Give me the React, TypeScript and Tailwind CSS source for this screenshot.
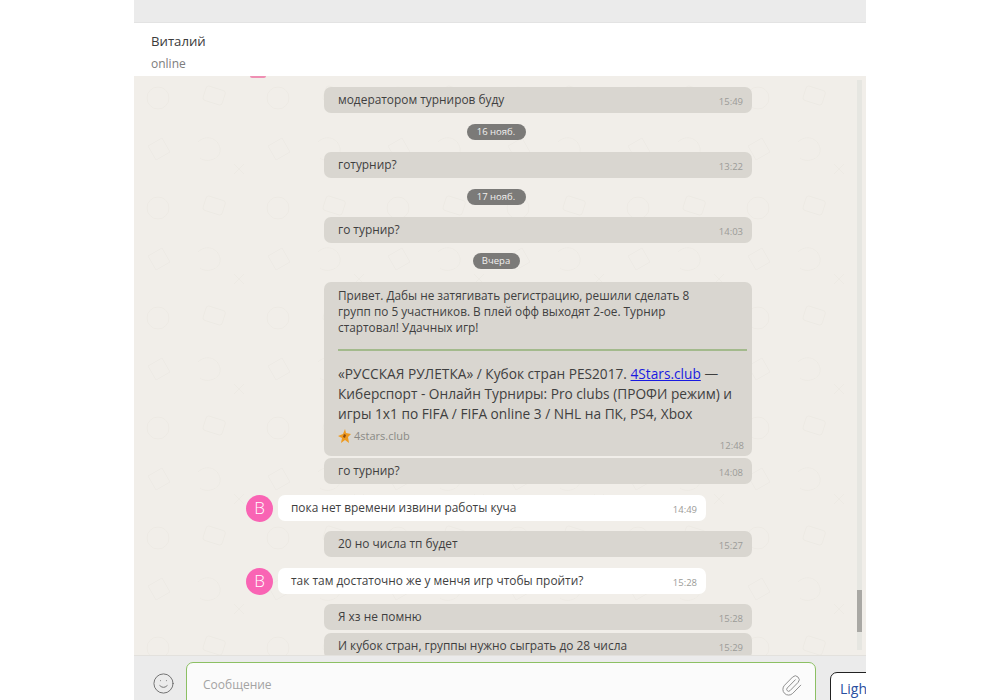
import { Paperclip, Smile } from 'lucide-react';

const font = { fontFamily: '"Open Sans", "Noto Sans", sans-serif' };

function Outgoing({ text, time, mt }: { text: string; time: string; mt: string }) {
  return (
    <div className={`${mt} ml-[190px] flex h-[26px] w-[428px] shrink-0 items-center justify-between rounded-[7px] bg-[#d9d6d0] pl-[14px] pr-[9px]`}>
      <span className="mt-[-1px] text-[11.9px] text-[#3f3f3f]">{text}</span>
      <span className="mt-[5px] text-[9.5px] text-[#9b9b98]">{time}</span>
    </div>
  );
}

function Incoming({ text, time, mt }: { text: string; time: string; mt: string }) {
  return (
    <div className={`${mt} ml-[112px] flex h-[26px] shrink-0 items-center gap-[5px]`}>
      <div className="flex h-[27px] w-[27px] items-center justify-center rounded-full bg-[#f964b4] text-[17px] font-light text-white">В</div>
      <div className="flex h-[26px] w-[428px] items-center justify-between rounded-[7px] bg-white pl-[13px] pr-[9px]">
        <span className="mt-[-1px] text-[11.9px] text-[#3f3f3f]">{text}</span>
        <span className="mt-[5px] text-[9.5px] text-[#9b9b98]">{time}</span>
      </div>
    </div>
  );
}

function DatePill({ text, mt, w }: { text: string; mt: string; w: string }) {
  return (
    <div className={`${mt} flex w-[724px] shrink-0 justify-center`}>
      <div className={`${w} flex h-[16px] items-center justify-center rounded-full bg-[#7b7a78] text-[9.5px] font-medium text-[#f1f0ee]`}>{text}</div>
    </div>
  );
}

function Doodles() {
  // faint wallpaper drawing behind the messages
  return (
    <svg className="absolute inset-0 h-full w-full" aria-hidden="true">
      <defs>
        <pattern id="doodle" width="120" height="110" patternUnits="userSpaceOnUse">
          <g fill="none" stroke="#edeae4" strokeWidth="1">
            <circle cx="24" cy="22" r="11" />
            <rect x="70" y="12" width="20" height="15" rx="3" transform="rotate(18 80 20)" />
            <path d="M14 70l14-8 8 14-14 8z" />
            <path d="M64 66c8-8 20-4 22 6s-12 16-20 10" />
            <path d="M100 88l10 10M110 88l-10 10" />
          </g>
        </pattern>
      </defs>
      <rect width="100%" height="100%" fill="url(#doodle)" />
    </svg>
  );
}

export default function App() {
  return (
    <div className="h-[700px] w-[1000px] overflow-hidden bg-white" style={font}>
      <div className="mx-auto flex h-[700px] w-[732px] flex-col overflow-hidden">
        <div className="h-[23px] shrink-0 border-b border-[#e3e3e3] bg-[#ebebeb]" />
        <div className="h-[53px] shrink-0 bg-white pl-[17px] pt-[8px]">
          <div className="text-[13.2px] leading-[20px] text-[#3b3b3b]">Виталий</div>
          <div className="mt-[5px] text-[12px] leading-[16px] text-[#7d7d7d]">online</div>
        </div>
        <div className="relative flex h-[579px] shrink-0 flex-col overflow-hidden bg-[#f1eee9]">
          <Doodles />
          <div className="absolute left-[723px] top-[4px] h-[570px] w-[5px] bg-[#e6e6e1]">
            <div className="mt-[510px] h-[42px] w-[5px] bg-[#a9a8a4]" />
          </div>
          <div className="relative flex flex-col">
            <div className="ml-[116px] h-[2px] w-[16px] rounded-b-full bg-[#ef8fb3]" />
            <Outgoing mt="mt-[9px]" text="модератором турниров буду" time="15:49" />
            <DatePill mt="mt-[11px]" w="w-[59px]" text="16 нояб." />
            <Outgoing mt="mt-[12px]" text="готурнир?" time="13:22" />
            <DatePill mt="mt-[11px]" w="w-[59px]" text="17 нояб." />
            <Outgoing mt="mt-[12px]" text="го турнир?" time="14:03" />
            <DatePill mt="mt-[10px]" w="w-[47px]" text="Вчера" />
            <div className="relative ml-[190px] mt-[13px] h-[174px] w-[428px] shrink-0 rounded-[7px] bg-[#d9d6d0] pl-[14px] pr-[5px] pt-[5px]">
              <p className="whitespace-nowrap text-[11.8px] leading-[16px] text-[#3f3f3f]">
                Привет. Дабы не затягивать регистрацию, решили сделать 8
                <br />
                групп по 5 участников. В плей офф выходят 2-ое. Турнир
                <br />
                стартовал! Удачных игр!
              </p>
              <div className="mt-[14px] h-[2px] bg-[#a3ba8c]" />
              <p className="mt-[13px] whitespace-nowrap text-[13.7px] leading-[20px] text-[#3f3f3f]">
                «РУССКАЯ РУЛЕТКА» / Кубок стран PES2017. <span className="text-[#1a1ae0] underline">4Stars.club</span> —
                <br />
                Киберспорт - Онлайн Турниры: Pro clubs (ПРОФИ режим) и
                <br />
                игры 1х1 по FIFA / FIFA online 3 / NHL на ПК, PS4, Xbox
              </p>
              <div className="mt-[4px] flex items-center gap-[3px]">
                <svg width="13" height="15" viewBox="0 0 13 15">
                  <path d="M7 0l1 4 5 1-3 3 1 6-4-3-4 3 1-5-4-2 5-2z" fill="#ef9a1e" />
                  <path d="M6 5l2 1-1 3-2-1z" fill="#8a4b12" />
                </svg>
                <span className="text-[11px] text-[#8a8a86]">4stars.club</span>
              </div>
              <span className="absolute bottom-[3px] right-[8px] text-[9.5px] text-[#9b9b98]">12:48</span>
            </div>
            <Outgoing mt="mt-[2px]" text="го турнир?" time="14:08" />
            <Incoming mt="mt-[11px]" text="пока нет времени извини работы куча" time="14:49" />
            <Outgoing mt="mt-[10px]" text="20 но числа тп будет" time="15:27" />
            <Incoming mt="mt-[11px]" text="так там достаточно же у менчя игр чтобы пройти?" time="15:28" />
            <Outgoing mt="mt-[10px]" text="Я хз не помню" time="15:28" />
            <Outgoing mt="mt-[3px]" text="И кубок стран, группы нужно сыграть до 28 числа" time="15:29" />
          </div>
        </div>
        <div className="flex min-h-0 flex-1 overflow-hidden border-t border-[#e3e1dd] bg-[#ebebeb]">
          <div className="flex w-[52px] shrink-0 items-start justify-center pt-[16px]">
            <Smile size={23} strokeWidth={1} className="ml-[6px] text-[#6f6f6f]" />
          </div>
          <div className="mt-[6px] flex h-[60px] w-[630px] shrink-0 justify-between rounded-t-[7px] border border-[#8cc063] bg-[#fbfbfb] pl-[16px] pr-[12px] pt-[13px]">
            <span className="text-[12px] leading-[18px] text-[#a3a3a3]">Сообщение</span>
            <Paperclip size={23} strokeWidth={1} className="mt-[-2px] text-[#8b8b8b]" />
          </div>
          <div className="ml-[14px] mt-[16px] h-[60px] w-[60px] shrink-0 rounded-t-[7px] border border-[#222] bg-white pl-[9px] pt-[8px] text-[14px] leading-[16px] text-[#2a4fa0]">
            Light
            <br />
            <span className="text-[#222]">А</span>
          </div>
        </div>
      </div>
    </div>
  );
}
